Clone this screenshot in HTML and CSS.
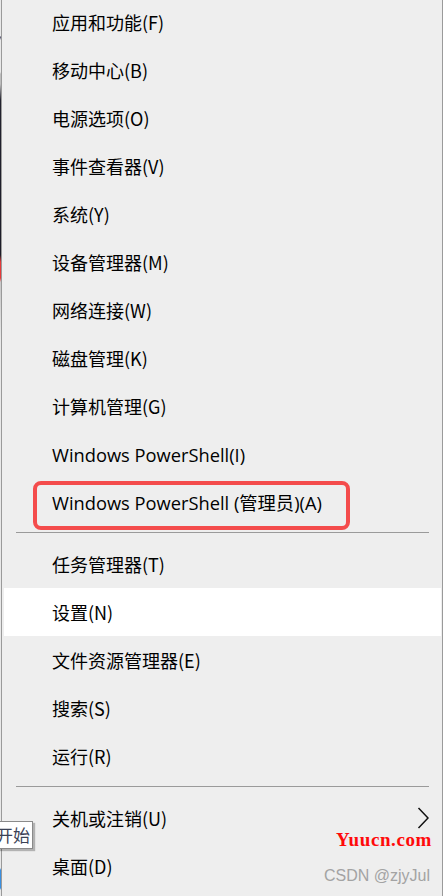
FILE: index.html
```html
<!DOCTYPE html>
<html lang="zh-CN">
<head>
<meta charset="utf-8">
<title>Win+X 菜单</title>
<link rel="stylesheet" href="styles.css">
</head>
<body>
<div class="page">
  <div class="desk-strip"></div>
  <div class="menu">
    <ul class="group group-first">
      <li class="item">应用和功能(F)</li>
      <li class="item">移动中心(B)</li>
      <li class="item">电源选项(O)</li>
      <li class="item">事件查看器(V)</li>
      <li class="item">系统(Y)</li>
      <li class="item">设备管理器(M)</li>
      <li class="item">网络连接(W)</li>
      <li class="item">磁盘管理(K)</li>
      <li class="item">计算机管理(G)</li>
      <li class="item latin">Windows PowerShell(I)</li>
      <li class="item latin marked">Windows PowerShell (管理员)(A)</li>
    </ul>
    <div class="sep"></div>
    <ul class="group">
      <li class="item">任务管理器(T)</li>
      <li class="item active">设置(N)</li>
      <li class="item">文件资源管理器(E)</li>
      <li class="item">搜索(S)</li>
      <li class="item">运行(R)</li>
    </ul>
    <div class="sep"></div>
    <ul class="group">
      <li class="item has-sub">关机或注销(U)
        <svg class="chev" width="12" height="22" viewBox="0 0 12 22"><path d="M1.5 1 L11 11 L1.5 21" fill="none" stroke="#111" stroke-width="1.5"/></svg>
      </li>
      <li class="item">桌面(D)</li>
    </ul>
    <div class="wm-site">Yuucn.com</div>
    <div class="wm-csdn">CSDN @zjyJul</div>
  </div>
  <div class="tooltip">开始</div>
</div>
</body>
</html>
```
FILE: styles.css
```css
html, body {
  margin: 0;
  padding: 0;
  height: 100%;
  overflow: hidden;
}
body {
  background: #eeeeee;
  font-family: "Noto Sans CJK SC", "Noto Sans", sans-serif;
  color: #000;
}
.page {
  position: relative;
  display: flex;
  width: 443px;
  height: 896px;
}
.desk-strip {
  width: 1px;
  flex: none;
  background: linear-gradient(to bottom,
    #e8e8e8 0, #e8e8e8 36px, #4a4a66 37px, #e8e8e8 40px,
    #e8e8e8 72px, #bdbdbd 74px, #bdbdbd 84px,
    #22222e 100px, #1c1c28 255px, #e63a3a 262px, #e63a3a 278px,
    #c8c8c8 282px, #d0d0d0 300px, #e8e8e8 340px, #e8e8e8 868px,
    #3a8fe0 870px, #3a8fe0 888px, #e8e8e8 890px);
}
.menu {
  position: relative;
  flex: 1;
  background: #eeeeee;
  border-left: 1px solid #9a9a9a;
  border-right: 1px solid #9a9a9a;
}
.group {
  list-style: none;
  margin: 0;
  padding: 0;
}
.group-first {
  margin-top: -2px;
}
.item {
  position: relative;
  display: flex;
  align-items: center;
  height: 48px;
  padding-left: 50px;
  font-size: 18px;
  font-family: "Noto Sans CJK SC", sans-serif;
  white-space: nowrap;
}
.item.latin {
  font-family: "Open Sans", "Noto Sans CJK SC", sans-serif;
  font-size: 18.3px;
}
.item.active {
  background: #ffffff;
  margin: 0 1px 0 2px;
  padding-left: 48px;
}
.item.marked::after {
  content: "";
  position: absolute;
  left: 31px;
  top: 3px;
  width: 309px;
  height: 41px;
  border: 4px solid #f44c4c;
  border-radius: 8px;
}
.has-sub .chev {
  position: absolute;
  right: 13px;
  top: 13px;
}
.sep {
  height: 1px;
  margin: 6px 13px 7px 14px;
  background: #9a9a9a;
}
.wm-site {
  position: absolute;
  right: 10px;
  top: 828px;
  font-family: "Liberation Serif", serif;
  font-weight: bold;
  font-size: 19px;
  letter-spacing: 0.6px;
  line-height: 24px;
  color: #ff0a0a;
}
.wm-csdn {
  position: absolute;
  right: 12px;
  top: 867px;
  font-family: "Liberation Sans", sans-serif;
  font-size: 16px;
  color: #a3a3a3;
}
.tooltip {
  position: absolute;
  right: 410px;
  top: 821px;
  height: 26px;
  padding: 0 2px 0 0;
  background: #ffffff;
  border: 1px solid #8a8a8a;
  box-shadow: 2px 2px 1px rgba(0, 0, 0, 0.25);
  font-family: "Noto Sans CJK SC", sans-serif;
  font-size: 17px;
  line-height: 25px;
  color: #3b4256;
  white-space: nowrap;
}
```
